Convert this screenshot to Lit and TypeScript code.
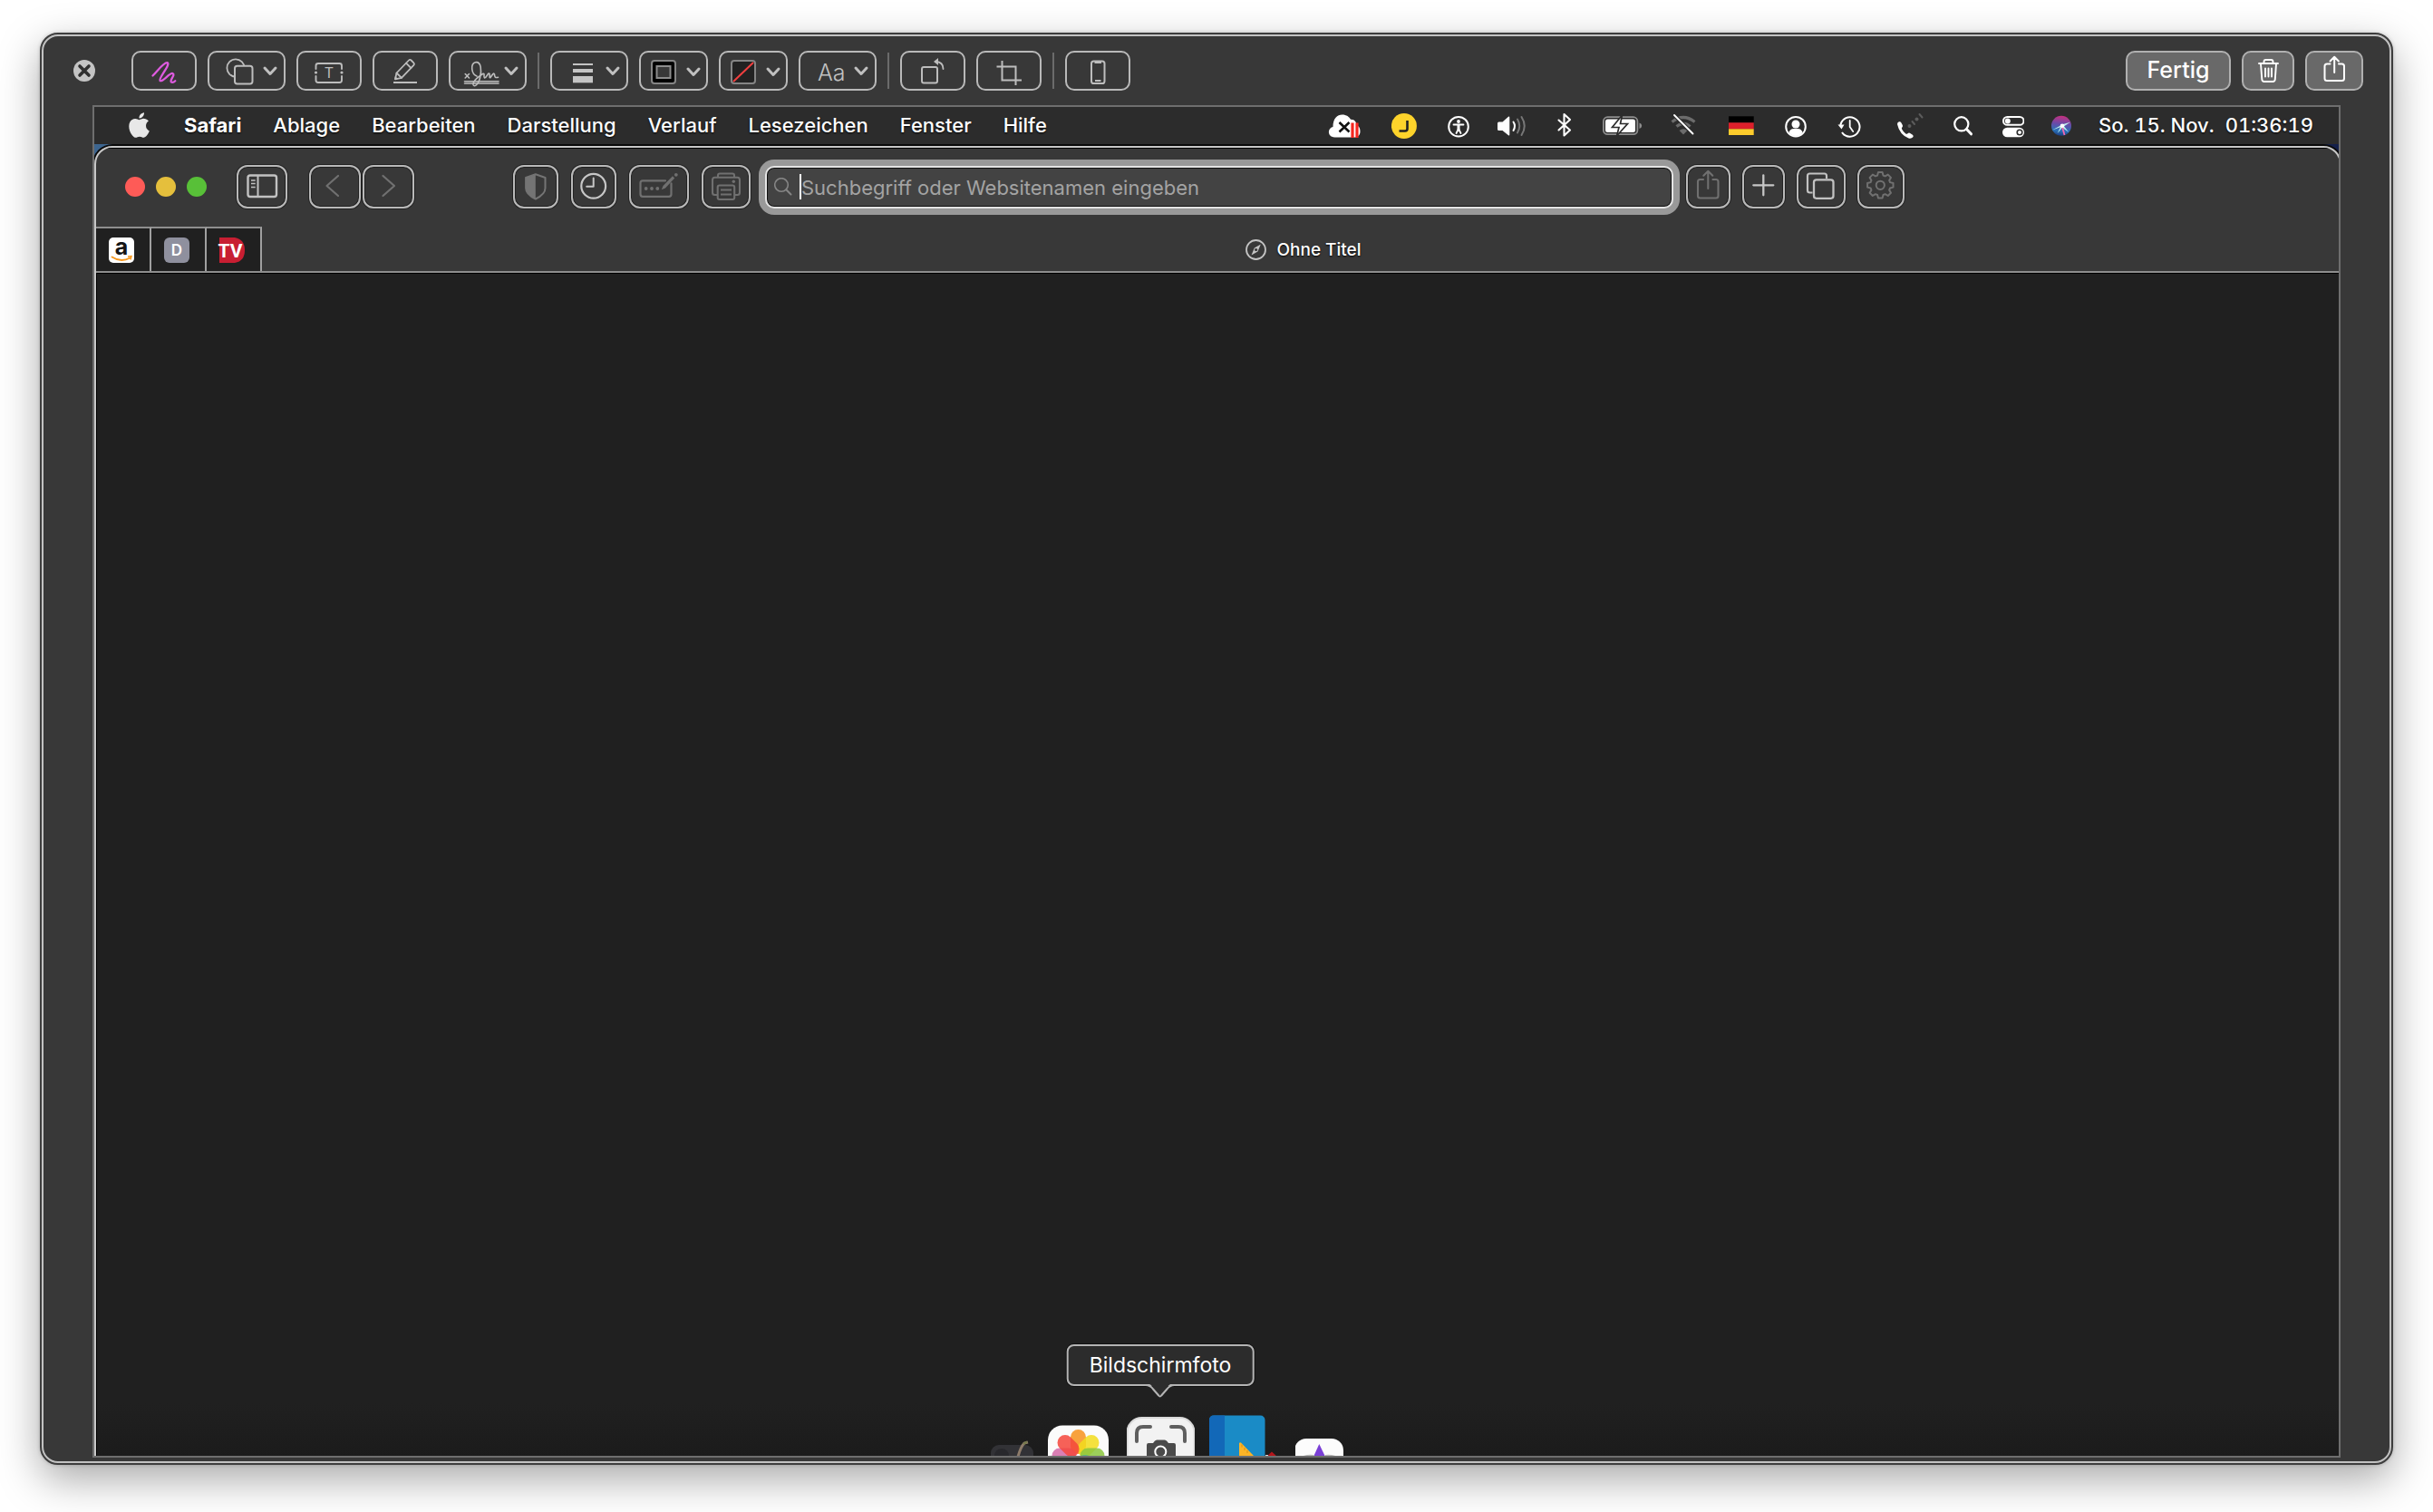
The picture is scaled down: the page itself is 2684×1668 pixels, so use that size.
import { LitElement, html, css, svg, TemplateResult, SVGTemplateResult } from "lit";
import { customElement, property } from "lit/decorators.js";

interface IconButton {
  label: string;
  width: number;
  art: SVGTemplateResult;
  kind?: string;
}

const chevron = (x: number, y: number) =>
  svg`<path d="M${x - 6} ${y - 3}l6 6.5 6-6.5" fill="none" stroke="#c0c0c0" stroke-width="3" stroke-linecap="round" stroke-linejoin="round"/>`;

const drawTools: IconButton[] = [
  {
    label: "Skizze",
    width: 72,
    art: svg`<path d="M23.500 27.500C29 22 35.500 12.800 39.500 13.200C44 14.500 29.500 30.500 31.500 33C34 35.500 42 24 45.500 25C49 26.500 41.500 32.500 44 34.500C45.500 35.300 47 34.500 48.300 33.200" fill="none" stroke="#df5be0" stroke-width="2.300" stroke-linecap="round"/>`,
  },
  {
    label: "Formen",
    width: 86,
    art: svg`<circle cx="31" cy="19" r="9.600" fill="none" stroke="#bdbdbd" stroke-width="1.800"/><rect x="30" y="16.800" width="19.500" height="19.600" rx="2.600" fill="#383838" stroke="#bdbdbd" stroke-width="2"/>${chevron(69, 22)}`,
  },
  {
    label: "Text",
    width: 72,
    art: svg`<g fill="none" stroke="#bdbdbd" stroke-width="1.900" stroke-linecap="round"><path d="M21.500 20v-3.500a2.500 2.500 0 0 1 2.500-2.500h23.500a2.500 2.500 0 0 1 2.500 2.500V20M21.500 28v4.500a2.500 2.500 0 0 0 2.500 2.500h23.500a2.500 2.500 0 0 0 2.500-2.500V28"/></g><circle cx="21.500" cy="24" r="1.600" fill="#bdbdbd"/><circle cx="50" cy="24" r="1.600" fill="#bdbdbd"/><text x="36" y="30" text-anchor="middle" font-size="16" font-family="Inter, sans-serif" fill="#bdbdbd">T</text>`,
  },
  {
    label: "Hervorheben",
    width: 72,
    art: svg`<g fill="none" stroke="#bdbdbd" stroke-width="1.800" stroke-linejoin="round" stroke-linecap="round"><path d="M26.500 24.500L40 10.500q1.200-1.200 2.600 0l2.800 2.800q1.200 1.300 0 2.600L32 29.800l-7 1.500z"/><path d="M37 13.600l5.400 5.400M26.500 24.500l5.500 5.300"/></g><path d="M23 35h26" stroke="#bdbdbd" stroke-width="2"/><path d="M24 31.800l4-.8-3-3z" fill="#bdbdbd"/>`,
  },
  {
    label: "Unterschreiben",
    width: 86,
    art: svg`<g fill="none" stroke="#bdbdbd" stroke-width="1.600" stroke-linecap="round" stroke-linejoin="round"><path d="M18.200 25.500l4.300 4.500M22.500 25.500l-4.300 4.500M17.500 33.700H55M17.500 36H55" /><path d="M31 28C25 26 23.500 14.500 29.500 12.700C36 11.500 36.500 22 34.500 30C33 36.500 28.500 41 27 37.500C26 33.500 33 28.500 37.500 25.500C40.500 24 38 29 39.500 30C42 30 43.500 23 45 25.500C45.500 28 44.500 30.500 46 29.500C48 27 49.500 23.500 50.500 26C50.500 29 51.500 30 54.500 29.300"/></g>${chevron(69, 22)}`,
  },
];

const styleTools: IconButton[] = [
  {
    label: "Linienstärke",
    width: 86,
    art: svg`<g fill="#c4c4c4"><rect x="25" y="14" width="22" height="2"/><rect x="25" y="20" width="22" height="4"/><rect x="25" y="28" width="22" height="7.300"/></g>${chevron(69, 22)}`,
  },
  {
    label: "Rahmenfarbe",
    width: 76,
    kind: "raised",
    art: svg`<rect x="14" y="11" width="26" height="25" rx="3" fill="#000" stroke="#858585" stroke-width="2"/><rect x="19.500" y="17" width="15" height="13" fill="#383838" stroke="#8c8c8c" stroke-width="2"/>${chevron(60, 23)}`,
  },
  {
    label: "Füllfarbe",
    width: 76,
    kind: "raised",
    art: svg`<rect x="14" y="11" width="26" height="25" rx="3" fill="#222" stroke="#858585" stroke-width="2"/><path d="M16 34L38 13" stroke="#f23f3f" stroke-width="2"/>${chevron(60, 23)}`,
  },
  {
    label: "Textstil",
    width: 86,
    art: svg`<text x="21" y="33" font-size="25" font-family="Inter, sans-serif" font-weight="300" fill="#c0c0c0">Aa</text>${chevron(69, 22)}`,
  },
];

const editTools: IconButton[] = [
  {
    label: "Nach links drehen",
    width: 72,
    art: svg`<rect x="24" y="18" width="17" height="17.500" rx="2" fill="none" stroke="#bdbdbd" stroke-width="2"/><path d="M47.500 20q0-7.500-8-8" fill="none" stroke="#bdbdbd" stroke-width="1.800" stroke-linecap="round"/><path d="M37 12l5-4v8z" fill="#bdbdbd"/>`,
  },
  {
    label: "Beschneiden",
    width: 72,
    art: svg`<path d="M28.500 11v21.500H50M22.500 17.500h21V38" fill="none" stroke="#bdbdbd" stroke-width="2"/>`,
  },
];

const deviceTools: IconButton[] = [
  {
    label: "Auf dem iPhone markieren",
    width: 72,
    art: svg`<rect x="29" y="11.500" width="14.500" height="24.500" rx="2.600" fill="none" stroke="#bdbdbd" stroke-width="2"/><path d="M32.500 13h7.500M33 33h6.500" stroke="#bdbdbd" stroke-width="1.800"/>`,
  },
];

const finishTools: IconButton[] = [
  {
    label: "Löschen",
    width: 58,
    kind: "filled",
    art: svg`<g fill="none" stroke="#fff" stroke-width="1.900" stroke-linecap="round" stroke-linejoin="round"><path d="M19 14h21M24.500 13.500v-1.500q0-2 2-2h6q2 0 2 2v1.500M21 14.500l1.300 17q.2 2.500 2.500 2.500h9.500q2.300 0 2.500-2.500l1.200-17M26 19.500v9M29.500 19.500v9M33 19.500v9"/></g>`,
  },
  {
    label: "Teilen",
    width: 64,
    kind: "filled",
    art: svg`<g fill="none" stroke="#fff" stroke-width="2" stroke-linecap="round" stroke-linejoin="round"><path d="M27.500 14.500h-3.500q-2.500 0-2.500 2.500v13.500q0 2.500 2.500 2.500h16.500q2.500 0 2.500-2.500v-13.500q0-2.500-2.500-2.500h-3.500M32.200 24V7M27.500 11.500L32.200 6.800l4.700 4.700"/></g>`,
  },
];

const navTools: IconButton[] = [
  {
    label: "Zurück",
    width: 57,
    art: svg`<path d="M32 12L19.500 23l12.500 11" fill="none" stroke="#707070" stroke-width="2.200" stroke-linecap="round" stroke-linejoin="round"/>`,
  },
  {
    label: "Vorwärts",
    width: 57,
    art: svg`<path d="M22.500 12L35 23 22.500 34" fill="none" stroke="#707070" stroke-width="2.200" stroke-linecap="round" stroke-linejoin="round"/>`,
  },
];

const sidebarTool: IconButton = {
  label: "Seitenleiste einblenden",
  width: 56,
  art: svg`<rect x="12.500" y="11.500" width="31.500" height="23.500" rx="2.500" fill="none" stroke="#c2c2c2" stroke-width="2.400"/><path d="M23.500 11v24" stroke="#c2c2c2" stroke-width="2"/><path d="M16 17h4.700M16 20.500h4.700M16 24.500h4.700" stroke="#c2c2c2" stroke-width="1.500"/>`,
};

const pageTools: IconButton[] = [
  {
    label: "Datenschutzbericht",
    width: 50,
    art: svg`<path d="M24.800 10.200L35.500 14v11.500c0 5.500-5.500 9.500-10.700 12-5.200-2.500-10.700-6.500-10.700-12V14z" fill="none" stroke="#747474" stroke-width="2" stroke-linejoin="round"/><path d="M24.800 10.200v27.300c-5.200-2.500-10.700-6.500-10.700-12V14z" fill="#747474"/>`,
  },
  {
    label: "Verlauf einblenden",
    width: 50,
    art: svg`<circle cx="24.700" cy="23.300" r="13.400" fill="none" stroke="#c6c6c6" stroke-width="2.200"/><path d="M24.700 14.500v9.200h-7.500" fill="none" stroke="#c6c6c6" stroke-width="2" stroke-linecap="round" stroke-linejoin="round"/>`,
  },
  {
    label: "Formular automatisch ausfüllen",
    width: 66,
    art: svg`<path d="M40 17.300H15q-2.500 0-2.500 2.500v12.500q0 2.500 2.500 2.500h29q2.500 0 2.500-2.500v-12" fill="none" stroke="#707070" stroke-width="2.200" stroke-linecap="round"/><g fill="#707070"><circle cx="18.700" cy="26" r="1.900"/><circle cx="25" cy="26" r="1.900"/><circle cx="31.300" cy="26" r="1.900"/><path d="M35.800 27.300l1.700-4.300L48 12.300l2.200 2.200L40 25.500z"/><circle cx="51.800" cy="10.800" r="1.900"/></g>`,
  },
  {
    label: "Drucken",
    width: 54,
    art: svg`<g fill="none" stroke="#707070" stroke-width="2.100" stroke-linejoin="round"><path d="M18 13.500v-2q0-2 2-2h14q2 0 2 2v2M17 33h-2.500q-2.500 0-2.500-2.500v-14q0-2.800 2.500-2.800h25q2.500 0 2.500 2.800v14q0 2.500-2.500 2.500H37"/><rect x="17.700" y="22.500" width="18.500" height="15.500" rx="2"/><path d="M21 27.500h12M21 32.500h12" stroke-width="1.800"/></g><circle cx="35.300" cy="18.300" r="1.700" fill="#707070"/>`,
  },
];

const gearPath = (cx: number, cy: number): string => {
  const points: string[] = [];
  for (let i = 0; i < 8; i++) {
    const base = (i * Math.PI) / 4 - Math.PI / 2;
    for (const [offset, radius] of [
      [-0.29, 11.2],
      [-0.16, 14.4],
      [0.16, 14.4],
      [0.29, 11.2],
    ]) {
      points.push(`${cx + Math.cos(base + offset) * radius} ${cy + Math.sin(base + offset) * radius}`);
    }
  }
  return `M${points.join("L")}Z`;
};

const windowTools: IconButton[] = [
  {
    label: "Seite teilen",
    width: 49,
    art: svg`<g fill="none" stroke="#707070" stroke-width="2.100" stroke-linecap="round" stroke-linejoin="round"><path d="M19 16h-3.500q-2.500 0-2.500 2.500v15.500q0 2.500 2.500 2.500h17.500q2.500 0 2.500-2.500v-15.500q0-2.500-2.500-2.500H29.500M24.300 26V7M19.300 11.700l5-4.900 5 4.900"/></g>`,
  },
  {
    label: "Neuer Tab",
    width: 47,
    art: svg`<path d="M23.300 11.300v22M12.300 22.300h22" stroke="#c6c6c6" stroke-width="2.300" stroke-linecap="round"/>`,
  },
  {
    label: "Tabübersicht",
    width: 54,
    art: svg`<path d="M17.500 30.500H14.500q-2.500 0-2.500-2.500V12q0-2.500 2.500-2.500h16q2.500 0 2.500 2.500v3" fill="none" stroke="#c2c2c2" stroke-width="2.200"/><rect x="19" y="16.300" width="21.500" height="20.500" rx="2.700" fill="none" stroke="#c2c2c2" stroke-width="2.300"/>`,
  },
  {
    label: "Einstellungen",
    width: 52,
    art: svg`<path d="${gearPath(25.3, 22.3)}" fill="none" stroke="#707070" stroke-width="2" stroke-linejoin="round"/><circle cx="25.300" cy="22.300" r="4.600" fill="none" stroke="#707070" stroke-width="2"/>`,
  },
];

const statusItems: IconButton[] = [
  {
    label: "Cloud-Speicher",
    width: 40,
    art: svg`<path d="M7.500 33.500C2.500 33.500.7 30 .9 27.300c.2-3 2.300-4.800 4.600-5.300C5.300 12.500 10.500 8.500 15.500 8.500c5 0 8 2.500 9.500 5.300 4.500-.3 6.500 3.500 6.500 6.200 3 1.300 4 4 4 7 0 4-2.500 6.500-6 6.500z" fill="#fff"/><path d="M12.500 17l11 10.500M23.500 17l-11 10.500" stroke="#111" stroke-width="2.600"/><path d="M27 17.500V34M32 17.500V34" stroke="#f5261f" stroke-width="3.200"/>`,
  },
  {
    label: "Junos",
    width: 32,
    art: svg`<circle cx="13.900" cy="21" r="14" fill="#fdd32b"/><path d="M17.500 15v9q0 2.500-2.500 2.500H8.500" fill="none" stroke="#222" stroke-width="2.600"/>`,
  },
  {
    label: "Bedienungshilfen",
    width: 24,
    art: svg`<circle cx="12" cy="21.700" r="10.800" fill="none" stroke="#fff" stroke-width="2"/><circle cx="12" cy="16" r="1.900" fill="#fff"/><path d="M6.500 19.500h11M12 19.500v4.500l-2.500 5M12 24l2.500 5" fill="none" stroke="#fff" stroke-width="1.800" stroke-linecap="round"/><path d="M10.500 19h3v6h-3z" fill="#fff"/>`,
  },
  {
    label: "Lautstärke",
    width: 37,
    art: svg`<path d="M1 18q0-1.500 1.500-1.500h4l6.500-5.700q1.300-.8 1.300 1v18.500q0 1.800-1.300 1L6.500 26h-4Q1 26 1 24.500z" fill="#fff"/><g fill="none" stroke-width="2" stroke-linecap="round"><path d="M18.500 16.500q3 4.500 0 9.500" stroke="#fff"/><path d="M23 13.500q4.500 7.500 0 15" stroke="#777"/><path d="M27.500 11q6.500 10 0 20" stroke="#777"/></g>`,
  },
  {
    label: "Bluetooth",
    width: 20,
    art: svg`<path d="M1.500 14.500l12.500 11-6.500 6V8l6.500 6L1.500 25.500" fill="none" stroke="#fff" stroke-width="2.100" stroke-linejoin="round" stroke-linecap="round"/>`,
  },
  {
    label: "Batterie wird geladen",
    width: 45,
    art: svg`<rect x=".9" y="11.200" width="37.500" height="19" rx="4.500" fill="none" stroke="#8e8e8e" stroke-width="1.800"/><rect x="3" y="13.500" width="33" height="14.500" rx="2.500" fill="#fff"/><path d="M40.500 17.500q2.700 1 2.700 3.200t-2.700 3.200z" fill="#8e8e8e"/><path d="M21.500 9L10.500 22.500h7.500L15.500 32 27.500 18.500h-8z" fill="#fff" stroke="#2c2c2c" stroke-width="1.700"/>`,
  },
  {
    label: "WLAN deaktiviert",
    width: 34,
    art: svg`<g fill="none" stroke="#6c6c6c" stroke-width="3.200"><path d="M1.500 16.500q12.500-10 25 0"/><path d="M6.500 21.500q7.500-6.500 15 0"/></g><path d="M9.500 26q4.500-3.500 9 0L14 30.500z" fill="#6c6c6c"/><path d="M4 9l20.500 20.500" stroke="#2c2c2c" stroke-width="4"/><path d="M4 9l20.500 20.500" stroke="#fff" stroke-width="1.900" stroke-linecap="round"/>`,
  },
  {
    label: "Eingabequelle Deutsch",
    width: 32,
    art: svg`<path d="M0 10.300h27.700v7H0z" fill="#000"/><path d="M0 17.300h27.700v7H0z" fill="#dc1f2b"/><path d="M0 24.300h27.700V31H0z" fill="#fccb2c"/>`,
  },
  {
    label: "Benutzer",
    width: 28,
    art: svg`<circle cx="12" cy="21.700" r="10.800" fill="none" stroke="#fff" stroke-width="2"/><circle cx="12" cy="19" r="4.500" fill="#fff"/><path d="M4.500 28q1.500-4 5-4h5q3.500 0 5 4-2.500 4-7.500 4t-7.500-4z" fill="#fff"/>`,
  },
  {
    label: "Time Machine",
    width: 35,
    art: svg`<path d="M3.300 20A10.700 10.700 0 1 1 5 28" fill="none" stroke="#fff" stroke-width="2"/><path d="M.5 19.500h7L4.500 24.500z" fill="#fff"/><path d="M13.700 15v7l3.500 5" fill="none" stroke="#fff" stroke-width="1.800" stroke-linecap="round"/>`,
  },
  {
    label: "Telefon",
    width: 33,
    art: svg`<path d="M1 19q0-2 2-2.700 1.500-.4 2.300 1l1.500 2.800q.7 1.400-.5 2.500-.8.800-.2 2 1.500 3 4.200 4.900 1.200.7 2.200-.2 1.300-1.300 2.700-.4l2.700 1.900q1.500 1.200.4 2.500-1.800 2-4.800 1.200Q3.500 30.500 1 19z" fill="#fff"/><g stroke="#5c5c5c" stroke-width="2" stroke-linecap="round"><path d="M17.500 16l2.500 3M25.500 8l3 3.500"/></g><circle cx="14.500" cy="21" r="2" fill="#5c5c5c"/><circle cx="22.500" cy="13.500" r="2" fill="#5c5c5c"/>`,
  },
  {
    label: "Spotlight-Suche",
    width: 23,
    art: svg`<circle cx="8.800" cy="18.800" r="7.600" fill="none" stroke="#fff" stroke-width="2.200"/><path d="M14.500 24.500l5 5.300" stroke="#fff" stroke-width="3" stroke-linecap="round"/>`,
  },
  {
    label: "Kontrollzentrum",
    width: 25,
    art: svg`<rect x="2" y="11" width="22.500" height="8.800" rx="4.400" fill="none" stroke="#fff" stroke-width="2"/><circle cx="6.800" cy="15.400" r="3" fill="#fff"/><rect x="1" y="22.800" width="24" height="10.400" rx="5.200" fill="#fff"/><circle cx="20" cy="28" r="2.800" fill="#fff" stroke="#2c2c2c" stroke-width="1.600"/>`,
  },
  {
    label: "Siri",
    width: 22,
    art: svg`<defs><linearGradient id="siri" x1=".5" y1="0" x2=".4" y2="1"><stop offset="0" stop-color="#c8307f"/><stop offset=".4" stop-color="#6a4aa8"/><stop offset=".75" stop-color="#2a72b8"/><stop offset="1" stop-color="#1b3c80"/></linearGradient></defs><circle cx="11" cy="20.700" r="11" fill="url(#siri)"/><path d="M11 20L1 25.500l9-3.300-3.500 7 5.500-6.500 7 5-5-6.500 7-4.500-8 2.300z" fill="#bff0ee"/><path d="M12 22l2.500 9" stroke="#f26ab0" stroke-width="1.800"/><circle cx="12" cy="20.700" r="2.300" fill="#fff"/>`,
  },
];

const menus = ["Ablage", "Bearbeiten", "Darstellung", "Verlauf", "Lesezeichen", "Fenster", "Hilfe"];

const pinnedTabs: { label: string; art: SVGTemplateResult }[] = [
  {
    label: "Amazon",
    art: svg`<rect width="28" height="28" rx="5" fill="#fff"/><text x="14" y="19" text-anchor="middle" font-size="25" font-weight="700" font-family="Inter, sans-serif" fill="#151515">a</text><path d="M3.500 21.500q10 6.500 20 1" fill="none" stroke="#f7981d" stroke-width="1.800" stroke-linecap="round"/><path d="M21 21l4-.5-1 4" fill="none" stroke="#f7981d" stroke-width="1.400"/>`,
  },
  {
    label: "D",
    art: svg`<rect width="28" height="28" rx="6" fill="#8f909e"/><text x="14" y="20" text-anchor="middle" font-size="17" font-weight="600" font-family="Inter, sans-serif" fill="#fff">D</text>`,
  },
  {
    label: "TV",
    art: svg`<path d="M0 0h17q11 2 11 14t-11 14H0z" fill="#c81e32"/><text x="12" y="22" text-anchor="middle" font-size="21" font-weight="700" font-family="Roboto, sans-serif" fill="#fff">TV</text>`,
  },
];

const petals = ["#f7931e", "#f2dc1e", "#8cc63f", "#4fb58a", "#4a90d9", "#8e6bc0", "#d46aa8", "#f4473c"];

const dockItems: { label: string; width: number; tip?: boolean; art: SVGTemplateResult }[] = [
  {
    label: "Automator",
    width: 47,
    art: svg`<rect x="0" y="34" width="47" height="30" rx="9" fill="#323236"/><circle cx="12" cy="46" r="8" fill="#28282c"/><path d="M30 47q3-11 7-15l4-1" fill="none" stroke="#8d7b6a" stroke-width="3"/><path d="M36 33l4-2.500" stroke="#767a4c" stroke-width="2.500"/>`,
  },
  {
    label: "Fotos",
    width: 71,
    art: svg`<rect x="0" y="12.500" width="67" height="67" rx="16" fill="#fbfbfb"/>${petals.map(
      (color, i) =>
        svg`<rect x="25" y="17" width="17" height="27" rx="8.500" fill="${color}" opacity=".86" transform="rotate(${i * 45} 33.500 46)"/>`,
    )}`,
  },
  {
    label: "Bildschirmfoto",
    width: 75,
    tip: true,
    art: svg`<rect x=".5" y="4" width="74" height="74" rx="16" fill="#f2f2f2" stroke="#dadada" stroke-width="2"/><path d="M11 30v-9q0-7 7-7h8M49 14h8q7 0 7 7v9" fill="none" stroke="#5f5f5f" stroke-width="4" stroke-linecap="round"/><path d="M22 34q0-2 2-2h5q2-3.500 4-3.500h9q2 0 4 3.500h6q2 0 2 2v20H22z" fill="#4a4a4a"/><circle cx="37.300" cy="41.500" r="6" fill="#4a4a4a" stroke="#fff" stroke-width="2"/>`,
  },
  {
    label: "Skizzenbuch",
    width: 79,
    art: svg`<rect x="0" y="1.500" width="61.500" height="60" rx="5" fill="#1a8bc6"/><path d="M17 1.500H5q-5 0-5 5V50h17z" fill="#1268b8"/><path d="M33 47V32q1-1.500 2.500 0L50 47z" fill="#fbb427"/><path d="M36 33.500v3M39 37v3M42 40v3" stroke="#d98e12" stroke-width="1"/><path d="M63 47l6-5.500 6 5.500z" fill="#b3161c"/><path d="M62 45.500h3" stroke="#ddd" stroke-width="1"/>`,
  },
  {
    label: "iMovie",
    width: 54,
    art: svg`<rect x="-1" y="27" width="54" height="54" rx="13" fill="#fcfcfc"/><path d="M26.300 33L20 47h13z" fill="#7a3fd6"/><path d="M9 47q6-2 11-1M33 46q5-1 11 1" fill="none" stroke="#bbb" stroke-width="2"/>`,
  },
];

@customElement("glyph-button")
class GlyphButton extends LitElement {
  @property() label = "";
  @property({ type: Number }) width = 72;
  @property({ type: Number }) height = 44;
  @property() kind = "";
  @property({ attribute: false }) art?: SVGTemplateResult;

  static styles = css`
    :host {
      display: block;
      flex: none;
    }
    button {
      display: block;
      box-sizing: border-box;
      margin: 0;
      padding: 0;
      border: 2px solid #b9b9b9;
      border-radius: 10px;
      background: transparent;
    }
    svg {
      display: block;
    }
    .filled {
      background: #696969;
      border-color: #b0b0b0;
    }
    .outlined {
      border-radius: 12px;
      box-shadow: 0 0 0 1px #222, inset 0 0 0 1px #222;
    }
    .bare {
      border: 0;
      border-radius: 0;
    }
  `;

  render(): TemplateResult {
    const edge = this.kind === "bare" ? 0 : 2;
    const w = this.width - edge * 2;
    const h = this.height - edge * 2;
    return html`<button class=${this.kind || "plain"} aria-label=${this.label}>
      <svg width=${w} height=${h} viewBox="${edge} ${edge} ${w} ${h}" aria-hidden="true">${this.art}</svg>
    </button>`;
  }
}

const glyphs = (items: IconButton[], height: number, kind = "") =>
  items.map(
    (item) =>
      html`<glyph-button
        .label=${item.label}
        .width=${item.width}
        .height=${height}
        .kind=${item.kind ?? kind}
        .art=${item.art}
      ></glyph-button>`,
  );

@customElement("markup-toolbar")
class MarkupToolbar extends LitElement {
  static styles = css`
    :host {
      display: flex;
      align-items: center;
      gap: 12px;
      padding: 16px 29px 16px 33px;
    }
    .close {
      display: block;
      margin: 0 28px 0 0;
      padding: 0;
      border: 0;
      background: none;
    }
    .close svg {
      display: block;
    }
    .rule {
      width: 2px;
      height: 40px;
      background: #6b6b6b;
    }
    .done {
      margin: 0 0 0 auto;
      width: 116px;
      height: 44px;
      padding: 0 0 2px;
      border: 2px solid #b0b0b0;
      border-radius: 10px;
      background: #696969;
      color: #fff;
      font: 500 25px/36px Inter, sans-serif;
    }
  `;

  render(): TemplateResult {
    return html`
      <button class="close" aria-label="Schließen">
        <svg width="24" height="24" viewBox="0 0 24 24" aria-hidden="true">
          <circle cx="12" cy="12" r="12" fill="#c4c4c4" />
          <path d="M7 7l10 10M17 7L7 17" stroke="#303030" stroke-width="3.600" stroke-linecap="round" />
        </svg>
      </button>
      ${glyphs(drawTools, 44)}
      <span class="rule"></span>
      ${glyphs(styleTools, 44)}
      <span class="rule"></span>
      ${glyphs(editTools, 44)}
      <span class="rule"></span>
      ${glyphs(deviceTools, 44)}
      <button class="done">Fertig</button>
      ${glyphs(finishTools, 44)}
    `;
  }
}

@customElement("menu-bar")
class MenuBar extends LitElement {
  static styles = css`
    :host {
      display: flex;
      align-items: flex-start;
      height: 41px;
      padding: 0 28px 0 38px;
      background: #2c2c2c;
      color: #fff;
      font: 500 22px/40px Inter, sans-serif;
      text-shadow: 0 1px 2px #000;
      white-space: nowrap;
    }
    .menus,
    .status {
      display: flex;
      gap: 35px;
    }
    .status {
      gap: 30px;
      margin-left: auto;
    }
    button {
      margin: 0;
      padding: 0;
      border: 0;
      background: none;
      color: inherit;
      font: inherit;
      text-shadow: inherit;
    }
    .apple svg {
      display: block;
      padding-right: 3px;
    }
    .app {
      font-weight: 700;
    }
    .clock {
      display: flex;
      gap: 12px;
      font-variant-numeric: tabular-nums;
    }
  `;

  render(): TemplateResult {
    return html`
      <nav class="menus">
        <button class="apple" aria-label="Apple">
          <svg width="23" height="38" viewBox="2 -4 20 32" aria-hidden="true">
            <path
              fill="#e8e8e8"
              d="M12.152 6.896c-.948 0-2.415-1.078-3.960-1.040-2.040.027-3.910 1.183-4.961 3.014-2.117 3.675-.546 9.103 1.519 12.090 1.013 1.454 2.208 3.090 3.792 3.039 1.520-.065 2.090-.987 3.935-.987 1.831 0 2.350.987 3.960.948 1.637-.026 2.676-1.480 3.676-2.948 1.156-1.688 1.636-3.325 1.662-3.415-.039-.013-3.182-1.221-3.220-4.857-.026-3.040 2.480-4.494 2.597-4.559-1.429-2.090-3.623-2.324-4.390-2.376-2-.156-3.675 1.090-4.610 1.090zM15.530 3.830c.843-1.012 1.400-2.427 1.245-3.830-1.207.052-2.662.805-3.532 1.818-.780.896-1.454 2.338-1.273 3.714 1.338.104 2.715-.688 3.559-1.701"
            />
          </svg>
        </button>
        <button class="app">Safari</button>
        ${menus.map((name) => html`<button>${name}</button>`)}
      </nav>
      <div class="status">
        ${glyphs(statusItems, 40, "bare")}
        <time class="clock" datetime="2020-11-15T01:36:19"><span>So. 15. Nov.</span><span>01:36:19</span></time>
      </div>
    `;
  }
}

@customElement("safari-window")
class SafariWindow extends LitElement {
  static styles = css`
    :host {
      display: flex;
      flex-direction: column;
      flex: 1;
      min-height: 0;
      margin: 2px -3px -4px 0;
      border: 2px solid #c8c8c8;
      border-radius: 20px 20px 0 0;
      background: #383838;
      box-shadow: 0 0 0 2px #0a0a0a;
      overflow: hidden;
      font-family: Inter, sans-serif;
    }
    .bar {
      display: flex;
      align-items: center;
      height: 48px;
      padding: 19px 0 20px 32px;
      box-shadow: inset 0 1px 0 #000;
    }
    .lights {
      display: flex;
      gap: 12px;
      margin-right: 33px;
    }
    .light {
      width: 22px;
      height: 22px;
      padding: 0;
      border: 0;
      border-radius: 50%;
    }
    .red {
      background: #fe5b57;
    }
    .yellow {
      background: #e5bf3c;
    }
    .green {
      background: #58c038;
    }
    .nav {
      display: flex;
      gap: 2px;
      margin: 0 109px 0 24px;
    }
    .page {
      display: flex;
      gap: 14px;
      margin-right: 16px;
    }
    .window {
      display: flex;
      gap: 13px;
      margin-left: 14px;
    }
    .spare {
      flex: 23;
    }
    .field {
      flex: 47;
      display: flex;
      align-items: center;
      box-sizing: border-box;
      height: 47px;
      padding: 0 8px;
      border: 2px solid #e4e4e4;
      border-radius: 10px;
      background: #434343;
      box-shadow: 0 0 0 7px #999, inset 0 0 0 1px #111;
    }
    .lens {
      flex: none;
      margin-right: 8px;
    }
    .caret {
      width: 2px;
      height: 28px;
      background: #fff;
    }
    input {
      flex: 1;
      min-width: 0;
      height: 40px;
      padding: 2px 0 0;
      border: 0;
      outline: 0;
      background: none;
      color: #fff;
      font: 400 22px/38px Inter, sans-serif;
    }
    input::placeholder {
      color: #a3a3a3;
      opacity: 1;
    }
    .tabs {
      display: flex;
      height: 49px;
      border-bottom: 2px solid #8e8e8e;
    }
    .pin {
      display: grid;
      place-items: center;
      width: 61px;
      padding: 0 17px 0 14px;
      border: 0;
      border-top: 2px solid #8e8e8e;
      border-right: 2px solid #a0a0a0;
      background: #202020;
    }
    .pin svg {
      overflow: visible;
    }
    .tab {
      flex: 1;
      display: flex;
      align-items: center;
      justify-content: center;
      gap: 11px;
      padding: 2px 0 0 6px;
      border: 0;
      background: none;
      color: #fff;
      font: 500 19px/24px Inter, sans-serif;
      text-shadow: 0 1px 2px #000;
    }
    .page-area {
      flex: 1;
      min-height: 0;
      border-top: 1px solid #000;
      background: linear-gradient(#202020 calc(100% - 60px), #1b1b1b);
      box-shadow: inset 1px 0 0 #000;
      display: flex;
      flex-direction: column;
      justify-content: flex-end;
    }
    .dock {
      display: flex;
      justify-content: center;
      gap: 16px;
      height: 48px;
      padding-right: 112px;
    }
    .app {
      position: relative;
      display: block;
      height: 46px;
      padding: 0;
      border: 0;
      background: none;
    }
    .app svg {
      display: block;
    }
    .tip {
      position: absolute;
      bottom: 77px;
      left: 50%;
      transform: translateX(-50%);
      padding: 0 23px;
      border: 2px solid #b4b4b4;
      border-radius: 8px;
      background: #2c2c2c;
      box-shadow: 0 0 0 1px #111;
      color: #fff;
      font: 400 23px/42px Inter, sans-serif;
      white-space: nowrap;
    }
    .tip .tail {
      position: absolute;
      top: 100%;
      left: 50%;
      margin: -1px 0 0 -17px;
    }
  `;

  render(): TemplateResult {
    return html`
      <div class="bar">
        <div class="lights">
          <button class="light red" aria-label="Fenster schließen"></button>
          <button class="light yellow" aria-label="Im Dock ablegen"></button>
          <button class="light green" aria-label="Vollbild"></button>
        </div>
        ${glyphs([sidebarTool], 48, "outlined")}
        <div class="nav">${glyphs(navTools, 48, "outlined")}</div>
        <div class="page">${glyphs(pageTools, 48, "outlined")}</div>
        <label class="field">
          <svg class="lens" width="20" height="20" viewBox="0 0 20 20" aria-hidden="true">
            <circle cx="8" cy="8" r="7.300" fill="none" stroke="#858585" stroke-width="1.600" />
            <path d="M13.300 13.300L18.500 18.500" stroke="#858585" stroke-width="2" stroke-linecap="round" />
          </svg>
          <span class="caret"></span>
          <input
            type="text"
            aria-label="Adresse und Suche"
            placeholder="Suchbegriff oder Websitenamen eingeben"
          />
        </label>
        <div class="window">${glyphs(windowTools, 48, "outlined")}</div>
        <span class="spare"></span>
      </div>
      <div class="tabs">
        ${pinnedTabs.map(
          (tab) => html`<button class="pin" aria-label=${tab.label}>
            <svg width="28" height="28" viewBox="0 0 28 28" aria-hidden="true">${tab.art}</svg>
          </button>`,
        )}
        <button class="tab">
          <svg width="23" height="23" viewBox="0 0 23 23" aria-hidden="true">
            <circle cx="11.500" cy="11.500" r="10.500" fill="none" stroke="#c4c4c4" stroke-width="1.800" />
            <path d="M16.800 5.500l-3.300 8-7 4 3.300-8z" fill="#c4c4c4" />
            <circle cx="11.600" cy="11.500" r="1.600" fill="#383838" />
          </svg>
          Ohne Titel
        </button>
      </div>
      <main class="page-area">
        <div class="dock">
          ${dockItems.map(
            (item) => html`<button class="app" aria-label=${item.label}>
              <svg width=${item.width} height="46" viewBox="0 0 ${item.width} 46" aria-hidden="true">${item.art}</svg>
              ${item.tip
                ? html`<span class="tip"
                    >${item.label}
                    <svg class="tail" width="34" height="16" viewBox="0 0 34 16" aria-hidden="true">
                      <path d="M3 0h28q-4 1-6 4l-6.500 9q-1.500 2-3 0L9 4Q7 1 3 0z" fill="#2c2c2c" />
                      <path
                        d="M1 2q5 0 8 4l6.500 7.500q1.500 2 3 0L25 6q3-4 8-4"
                        fill="none"
                        stroke="#b4b4b4"
                        stroke-width="2"
                      />
                    </svg>
                  </span>`
                : ""}
            </button>`,
          )}
        </div>
      </main>
    `;
  }
}

@customElement("app-root")
class AppRoot extends LitElement {
  static styles = css`
    :host {
      display: block;
      box-sizing: border-box;
      height: 100vh;
      padding: 36px 44px 52px;
      background: #fff;
    }
    .preview {
      display: flex;
      flex-direction: column;
      box-sizing: border-box;
      height: 100%;
      border: 2px solid #3d3d3d;
      border-radius: 20px;
      background: #3d3d3d;
      box-shadow: 0 16px 46px rgba(0, 0, 0, 0.34), 0 0 4px rgba(0, 0, 0, 0.2);
    }
    .body {
      flex: 1;
      min-height: 0;
      display: flex;
      flex-direction: column;
      padding-bottom: 4px;
      border: 2px solid #c2c2c2;
      border-radius: 18px;
      background: #383838;
    }
    .shot {
      flex: 1;
      min-height: 0;
      display: flex;
      flex-direction: column;
      margin: 0 54px;
      border: 2px solid #6e6e6e;
      background: linear-gradient(90deg, #3d658f, #14204a);
      overflow: hidden;
    }
  `;

  render(): TemplateResult {
    return html`
      <div class="preview">
        <div class="body">
          <markup-toolbar></markup-toolbar>
          <div class="shot">
            <menu-bar></menu-bar>
            <safari-window></safari-window>
          </div>
        </div>
      </div>
    `;
  }
}
